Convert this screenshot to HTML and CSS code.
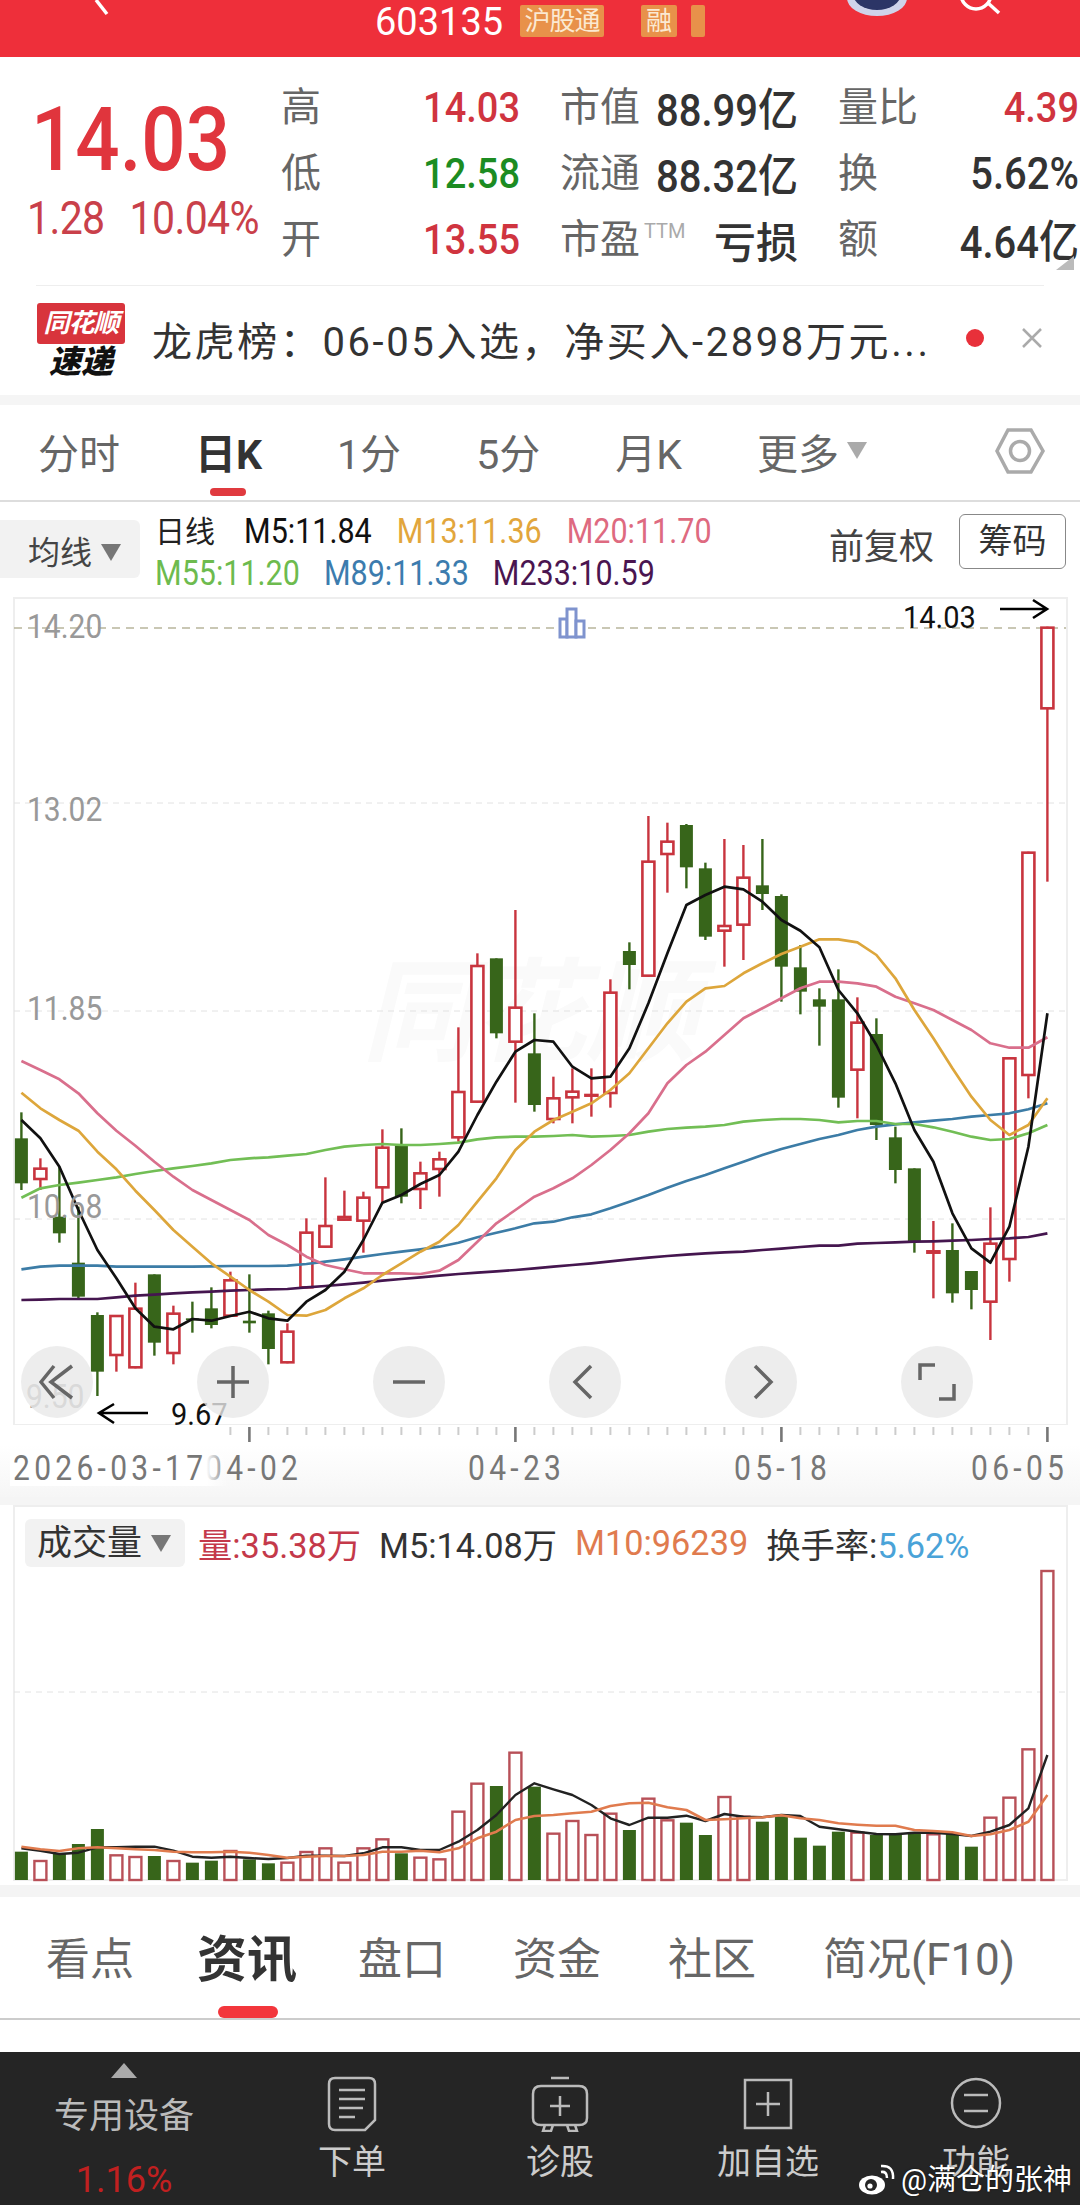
FILE: index.html
```html
<!DOCTYPE html>
<html>
<head>
    <meta charset="utf-8">
    <link rel="stylesheet" href="styles.css">
</head>
<body>
    <header class="top">
        <svg class="back" width="30" height="16" viewBox="0 0 30 16"><path d="M3 0 L14 14" /></svg>
        <div class="code-line">
            <span class="code">603135</span>
            <span class="tag tag-wide">沪股通</span>
            <span class="tag tag-one">融</span>
            <span class="tag tag-cut"></span>
        </div>
        <div class="top-right">
            <svg class="avatar" width="62" height="18" viewBox="0 0 62 18"><ellipse cx="31" cy="-2" rx="30" ry="18" fill="#cfd3ea" /><ellipse cx="31" cy="-6" rx="24" ry="16" fill="#2c3566" /></svg>
            <svg class="search" width="60" height="16" viewBox="0 0 60 16"><circle cx="24" cy="-6" r="15" /><path d="M36 3 L47 13" /></svg>
        </div>
    </header>

    <section class="quote">
        <div class="price-col">
            <div class="price t">14.03</div>
            <div class="change"><span class="t">1.28</span><span class="t">10.04%</span></div>
        </div>
        <div class="stats">
            <div class="cell"><span class="lb">高</span><span class="val red t">14.03</span></div>
            <div class="cell"><span class="lb">市值</span><span class="val t">88.99亿</span></div>
            <div class="cell"><span class="lb">量比</span><span class="val red t">4.39</span></div>
            <div class="cell"><span class="lb">低</span><span class="val green t">12.58</span></div>
            <div class="cell"><span class="lb">流通</span><span class="val t">88.32亿</span></div>
            <div class="cell"><span class="lb">换</span><span class="val t">5.62%</span></div>
            <div class="cell"><span class="lb">开</span><span class="val red t">13.55</span></div>
            <div class="cell"><span class="lb">市盈<sup class="ttm">TTM</sup></span><span class="val loss">亏损</span></div>
            <div class="cell"><span class="lb">额</span><span class="val t">4.64亿</span></div>
        </div>
        <i class="fold"></i>
    </section>

    <section class="news">
        <div class="logo">
            <div class="logo-flag">同花顺</div>
            <div class="logo-sub">速递</div>
        </div>
        <div class="news-text">龙虎榜：06-05入选，净买入-2898万元...</div>
        <i class="dot"></i>
        <svg class="close" width="24" height="24" viewBox="0 0 24 24"><path d="M3 3 L21 21 M21 3 L3 21" /></svg>
    </section>

    <nav class="periods">
        <a>分时</a>
        <a class="on">日K</a>
        <a>1分</a>
        <a>5分</a>
        <a>月K</a>
        <a>更多<i class="tri tri-more"></i></a>
        <svg class="hex" width="52" height="48" viewBox="0 0 52 48"><path d="M14 3 H37 L49 24 L37 45 H14 L3 24 Z" /><circle cx="26" cy="24" r="9.5" /></svg>
    </nav>

    <section class="legend">
        <div class="select">均线<i class="tri"></i></div>
        <div class="ma-list">
            <div class="ma-row">
                <span class="ma-title">日线</span>
                <span class="t">M5:11.84</span>
                <span class="t c13">M13:11.36</span>
                <span class="t c20">M20:11.70</span>
            </div>
            <div class="ma-row ma-row-low">
                <span class="t c55">M55:11.20</span>
                <span class="t c89">M89:11.33</span>
                <span class="t c233">M233:10.59</span>
            </div>
        </div>
        <div class="fq">前复权</div>
        <div class="chip">筹码</div>
    </section>

    <section class="kline">
        <svg id="klineSvg" width="1080" height="828" viewBox="0 597 1080 828"></svg>
        <div class="ctrls">
            <button><svg width="36" height="36" viewBox="0 0 36 36"><path d="M15 2 L2 18 L15 34 M33 2 L12 18 L33 34" /></svg></button>
            <button><svg width="36" height="36" viewBox="0 0 36 36"><path d="M18 2 V34 M2 18 H34" /></svg></button>
            <button><svg width="36" height="36" viewBox="0 0 36 36"><path d="M2 18 H34" /></svg></button>
            <button><svg width="36" height="36" viewBox="0 0 36 36"><path d="M24 2 L8 18 L24 34" /></svg></button>
            <button><svg width="36" height="36" viewBox="0 0 36 36"><path d="M12 2 L28 18 L12 34" /></svg></button>
            <button><svg width="38" height="38" viewBox="0 0 38 38"><path d="M17 2 H2 V17 M36 21 V36 H21" /></svg></button>
        </div>
    </section>
    <svg id="axisSvg" class="axis" width="1080" height="72" viewBox="0 1425 1080 72"></svg>

    <section class="volume">
        <div class="vol-head">
            <div class="select vol-select">成交量<i class="tri"></i></div>
            <span class="vol-red">量:35.38万</span>
            <span>M5:14.08万</span>
            <span class="vol-orange">M10:96239</span>
            <span>换手率:<b class="vol-blue">5.62%</b></span>
        </div>
        <svg id="volSvg" width="1080" height="380" viewBox="0 1505 1080 380"></svg>
    </section>

    <nav class="tabs">
        <a>看点</a>
        <a class="on">资讯</a>
        <a>盘口</a>
        <a>资金</a>
        <a>社区</a>
        <a>简况(F10)</a>
    </nav>

    <footer class="bar">
        <div class="bar-first">
            <i class="tri-up"></i>
            <div class="sector">专用设备</div>
            <div class="sector-pct">1.16%</div>
        </div>
        <div class="bar-item">
            <svg width="50" height="56" viewBox="0 0 50 56"><path d="M8 2 H42 Q48 2 48 8 V44 L38 54 H8 Q2 54 2 48 V8 Q2 2 8 2 Z M12 14 H38 M12 23 H38 M12 32 H36 M12 41 H28" /></svg>
            <span>下单</span>
        </div>
        <div class="bar-item">
            <svg width="58" height="56" viewBox="0 0 58 56"><path d="M20 2 H38 M10 10 H48 Q56 10 56 18 V42 Q56 49 48 49 H10 Q2 49 2 42 V18 Q2 10 10 10 Z M29 20 V40 M19 30 H39 M14 49 L12 55 H20 L22 49 M44 49 L46 55 H38 L36 49" /></svg>
            <span>诊股</span>
        </div>
        <div class="bar-item">
            <svg width="50" height="56" viewBox="0 0 50 56"><path d="M2 4 H48 V52 H2 Z M25 16 V40 M13 28 H37" /></svg>
            <span>加自选</span>
        </div>
        <div class="bar-item">
            <svg width="54" height="56" viewBox="0 0 54 56"><circle cx="27" cy="27" r="24" /><path d="M15 19 H39 M15 35 H39" /></svg>
            <span>功能</span>
        </div>
        <div class="mark">
            <svg width="38" height="32" viewBox="0 0 38 32"><ellipse cx="15" cy="21" rx="13" ry="9.5" fill="#fff" /><circle cx="14" cy="21" r="6" fill="#252525" /><circle cx="13" cy="22" r="2.6" fill="#fff" /><path d="M24 8 Q30 7 30 14 M24 2 Q37 1 36 15" /></svg>
            <span>@满仓的张神</span>
        </div>
    </footer>

    <script src="chart.js"></script>
</body>
</html>
```

FILE: styles.css
```css
* {
    box-sizing: border-box;
}
html, body {
    margin: 0;
    padding: 0;
}
body {
    width: 1080px;
    height: 2205px;
    overflow: hidden;
    background: #fff;
    font-family: Roboto, "Noto Sans CJK SC", sans-serif;
    color: #333;
}
i {
    display: inline-block;
}
.t {
    display: inline-block;
    transform: scaleY(1.13);
}

/* top red bar */
.top {
    height: 57px;
    background: #ee2f3a;
    display: grid;
    grid-template-columns: 375px auto 1fr;
    overflow: hidden;
}
.back {
    margin-left: 93px;
}
.back path, .search path, .search circle {
    fill: none;
    stroke: #fff;
    stroke-width: 3.5;
}
.code-line {
    display: flex;
    align-items: flex-start;
    height: 57px;
}
.code {
    color: #fff;
    font-size: 38px;
    line-height: 44px;
    width: 145px;
}
.tag {
    background: #e8914a;
    color: #fbe9d2;
    font-size: 26px;
    height: 32px;
    line-height: 32px;
    margin-top: 5px;
    border-radius: 2px;
    overflow: hidden;
}
.tag-wide {
    width: 84px;
    text-align: center;
    letter-spacing: -1px;
}
.tag-one {
    width: 36px;
    margin-left: 37px;
    text-align: center;
}
.tag-cut {
    width: 14px;
    margin-left: 14px;
}
.top-right {
    display: flex;
    align-items: flex-start;
    padding-left: 141px;
}
.search {
    margin-left: 44px;
}

/* quote */
.quote {
    height: 228px;
    display: flex;
    padding-top: 17px;
    position: relative;
}
.price-col {
    width: 281px;
    padding-left: 27px;
}
.price {
    display: block;
    font-size: 78px;
    font-weight: 500;
    line-height: 100px;
    margin-top: 17px;
    margin-left: 4px;
    color: #e0353d;
    transform-origin: left center;
}
.change {
    display: flex;
    gap: 25px;
    font-size: 41px;
    line-height: 44px;
    margin-top: 5px;
    color: #c9404a;
    letter-spacing: -0.6px;
    white-space: nowrap;
}
.stats {
    display: grid;
    grid-template-columns: 239px 238px 241px;
    grid-auto-rows: 66px;
    column-gap: 40px;
}
.cell {
    display: flex;
    justify-content: space-between;
    align-items: center;
    white-space: nowrap;
}
.lb {
    font-size: 40px;
    color: #666;
    line-height: 65px;
    position: relative;
}
.ttm {
    position: absolute;
    left: 84px;
    top: 14px;
    font-size: 20px;
    line-height: 20px;
    color: #aaa;
}
.val {
    font-size: 40px;
    font-weight: 500;
    color: #333;
}
.val.red {
    font-size: 38px;
    color: #d0343f;
}
.val.green {
    font-size: 38px;
    color: #1c8c22;
}
.val.loss {
    font-size: 42px;
}
.fold {
    position: absolute;
    right: 6px;
    top: 199px;
    width: 18px;
    height: 14px;
    background: #bbb;
    clip-path: polygon(100% 0, 100% 100%, 0 100%);
}

/* news line */
.news {
    height: 110px;
    margin: 0 36px;
    border-top: 1px solid #eee;
    display: flex;
    align-items: center;
    position: relative;
}
.logo {
    width: 88px;
    margin-left: 1px;
    text-align: center;
}
.logo-flag {
    background: #d8343c;
    color: #fff;
    font-size: 26px;
    font-style: italic;
    font-weight: 700;
    line-height: 40px;
    height: 41px;
    border-radius: 3px;
    letter-spacing: -1px;
    white-space: nowrap;
}
.logo-sub {
    font-size: 32px;
    font-style: italic;
    font-weight: 900;
    line-height: 32px;
    margin-top: 2px;
    color: #111;
}
.news-text {
    margin-left: 27px;
    width: 806px;
    font-size: 40px;
    line-height: 50px;
    letter-spacing: 2.6px;
    color: #333;
    white-space: nowrap;
    margin-top: 4px;
}
.dot {
    width: 18px;
    height: 18px;
    border-radius: 50%;
    background: #e8303a;
    margin-left: 8px;
    margin-top: -6px;
}
.close {
    margin-left: 36px;
    margin-top: -6px;
}
.close path {
    fill: none;
    stroke: #aaa;
    stroke-width: 2.5;
}

/* period tabs */
.periods {
    height: 107px;
    display: flex;
    align-items: flex-start;
    gap: 75px;
    padding: 28px 0 0 38px;
    border-bottom: 2px solid #ddd;
    background: #fff;
    border-top: 10px solid #f5f5f5;
    position: relative;
}
.periods a {
    font-size: 41px;
    line-height: 44px;
    color: #666;
    white-space: nowrap;
    position: relative;
}
.periods a.on {
    color: #333;
    font-weight: 700;
}
.periods a.on::after {
    content: "";
    position: absolute;
    left: 15px;
    top: 55px;
    width: 36px;
    height: 8px;
    border-radius: 4px;
    background: #e03a3f;
}
.tri {
    width: 0;
    height: 0;
    border-left: 10px solid transparent;
    border-right: 10px solid transparent;
    border-top: 17px solid #777;
    margin-left: 9px;
    vertical-align: 3px;
}
.tri-more {
    border-top-color: #aaa;
    margin-left: 8px;
    vertical-align: 10px;
}
.hex {
    position: absolute;
    left: 994px;
    top: 22px;
}
.hex path, .hex circle {
    fill: none;
    stroke: #aaa;
    stroke-width: 3.5;
}

/* moving average legend */
.legend {
    height: 95px;
    display: flex;
    align-items: flex-start;
    position: relative;
    font-size: 30.5px;
}
.select {
    background: #f2f2f2;
    border-radius: 0 6px 6px 0;
    color: #444;
    white-space: nowrap;
}
.legend .select {
    width: 140px;
    height: 58px;
    margin-top: 18px;
    padding-left: 28px;
    font-size: 32px;
    line-height: 66px;
}
.ma-list {
    margin-left: 15px;
    width: 668px;
    padding-top: 9px;
}
.ma-row {
    display: flex;
    gap: 25px;
    height: 42px;
    line-height: 42px;
    white-space: nowrap;
    color: #111;
}
.ma-row-low {
    gap: 24px;
}
.ma-title {
    font-size: 30px;
    margin-right: 4px;
    color: #222;
}
.c13 { color: #e2a63c; }
.c20 { color: #de6a80; }
.c55 { color: #6dbb4e; }
.c89 { color: #3c7cae; }
.c233 { color: #4a1550; }
.fq {
    width: 130px;
    margin-left: 6px;
    margin-top: 21px;
    font-size: 35px;
    line-height: 50px;
    color: #444;
    white-space: nowrap;
}
.chip {
    width: 107px;
    height: 55px;
    margin-top: 12px;
    border: 1px solid #888;
    border-radius: 6px;
    text-align: center;
    font-size: 34px;
    line-height: 52px;
    color: #333;
}

/* k line chart */
.kline {
    height: 828px;
    position: relative;
}
.kline svg, .volume svg, .axis {
    display: block;
}
.ctrls {
    position: absolute;
    left: 21px;
    top: 749px;
    width: 952px;
    display: flex;
    justify-content: space-between;
}
.ctrls button {
    width: 72px;
    height: 72px;
    padding: 0;
    border: 0;
    border-radius: 50%;
    background: rgba(232, 232, 232, 0.8);
    display: flex;
    align-items: center;
    justify-content: center;
}
.ctrls svg path {
    fill: none;
    stroke: #666;
    stroke-width: 3.5;
}
.axis {
    background: linear-gradient(#fff 20px, #f6f6f6);
}
.price-label {
    font-size: 30px;
    fill: #999;
}
.note {
    font-size: 29px;
    fill: #111;
}
.date {
    font-size: 30px;
    fill: #777;
    letter-spacing: 4.3px;
}
.mark-water {
    font-size: 112px;
    font-style: italic;
    font-weight: 700;
    fill: #fafafa;
}

/* volume */
.volume {
    height: 388px;
    border-top: 8px solid #f5f5f5;
    position: relative;
}
.vol-head {
    position: absolute;
    left: 0;
    top: 0;
    display: flex;
    align-items: center;
    height: 76px;
    font-size: 34.3px;
    color: #333;
    white-space: nowrap;
}
.vol-head b {
    font-weight: 400;
}
.vol-head span {
    margin-right: 18px;
}
.vol-select {
    width: 160px;
    height: 48px;
    margin-left: 25px;
    margin-right: 13px;
    padding-left: 12px;
    font-size: 35px;
    line-height: 49px;
    border-radius: 6px;
    color: #333;
}
.vol-red { color: #c4394a; }
.vol-orange { color: #e07b4e; }
.vol-blue { color: #4aa3d8; }

/* bottom tabs */
.tabs {
    height: 167px;
    border-top: 12px solid #f4f4f4;
    display: flex;
    align-items: flex-start;
    padding: 33px 0 0 46px;
    position: relative;
}
.tabs a {
    font-size: 44px;
    line-height: 60px;
    color: #666;
    margin-right: 67px;
    white-space: nowrap;
    position: relative;
}
.tabs a.on {
    font-size: 50px;
    font-weight: 700;
    color: #333;
    margin-left: -4px;
    margin-right: 61px;
}
.tabs a.on::after {
    content: "";
    position: absolute;
    left: 21px;
    top: 76px;
    width: 60px;
    height: 12px;
    border-radius: 6px;
    background: #f3363c;
}
.tabs::after {
    content: "";
    position: absolute;
    left: 0;
    right: 0;
    top: 121px;
    height: 2px;
    background: #ccc;
}

/* dark footer */
.bar {
    height: 153px;
    background: #252525;
    display: grid;
    grid-template-columns: 248px repeat(4, 1fr);
    position: relative;
    color: #ccc;
}
.bar-first {
    display: flex;
    flex-direction: column;
    align-items: center;
    padding-top: 11px;
}
.tri-up {
    width: 0;
    height: 0;
    border-left: 13px solid transparent;
    border-right: 13px solid transparent;
    border-bottom: 15px solid #aaa;
}
.sector {
    font-size: 35px;
    line-height: 50px;
    margin-top: 14px;
    color: #bbb;
}
.sector-pct {
    font-size: 36px;
    line-height: 44px;
    margin-top: 16px;
    color: #c02020;
}
.bar-item {
    display: flex;
    flex-direction: column;
    align-items: center;
    padding-top: 24px;
    font-size: 34px;
    line-height: 44px;
    white-space: nowrap;
}
.bar-item span {
    margin-top: 8px;
}
.bar-item svg path, .bar-item svg circle {
    fill: none;
    stroke: #bbb;
    stroke-width: 2.5;
}
.mark {
    position: absolute;
    left: 857px;
    top: 110px;
    display: flex;
    align-items: center;
    gap: 6px;
    color: #fff;
    font-size: 29px;
    line-height: 36px;
    white-space: nowrap;
    text-shadow: 0 0 2px rgba(0, 0, 0, 0.6);
}
.mark svg path {
    fill: none;
    stroke: #fff;
    stroke-width: 2.5;
}
```

FILE: chart.js
```js
// all y numbers below are in thirds of a pixel, counted from a fixed line
const ky = v => 980 + v / 3;
const vy = v => 1500 + v / 3;
const cx = i => 21.4 + 19 * i;

const RED = "#c8343e";
const GREEN = "#37651a";

// up/down, body top, body bottom, wick top, wick bottom
const candles = [
    ["g",475,610,397,630],["r",563,600,535,630],["g",710,760,560,788],["g",848,950,680,955],
    ["g",1005,1175,997,1248],["r",1005,1128,1005,1175],["r",983,1165,908,1165],["g",883,1088,883,1127],
    ["r",998,1122,977,1153],["g",1015,1021,965,1058],["g",985,1035,922,1045],["r",898,1010,875,1010],
    ["g",1022,1030,883,1058],["g",1000,1107,992,1153],["r",1052,1150,1030,1150],["r",755,925,715,925],
    ["r",735,803,592,803],["r",708,722,632,722],["r",650,725,635,818],["r",500,625,448,670],
    ["g",497,650,445,670],["r",577,630,545,687],["r",535,570,515,650],["r",333,475,142,485],
    ["r",-45,368,-80,368],["g",-65,160,-65,175],["r",80,188,-210,368],["g",220,375,100,395],
    ["r",352,420,290,430],["r",332,355,265,430],["r",342,350,265,410],["r",35,342,-2,383],
    ["g",-87,-45,-113,28],["r",-358,-10,-492,-10],["r",-418,-375,-472,-262],["g",-465,-338,-468,-275],
    ["g",-335,-130,-352,-120],["r",-165,-145,-423,-40],["r",-310,-163,-405,-60],["g",-284,-258,-423,-210],
    ["g",-252,-40,-257,65],["g",-38,35,-105,103],["g",58,80,25,197],["g",58,353,-32,383],
    ["r",125,272,52,415],["g",162,435,115,480],["g",472,570,440,610],["g",565,785,565,818],
    ["r",811,821,723,955],["g",810,940,730,968],["g",873,930,873,988],["r",788,968,682,1080],
    ["r",232,840,232,905],["r",-385,288,-385,355],["r",-1060,-812,-1060,-295]
];

const maLines = [
    { color: "#45164f", pts: [960,959,957,957,957,952,947,944,940,937,935,932,930,928,927,922,918,913,908,902,897,892,887,882,878,874,870,865,860,855,850,844,838,833,828,824,820,817,815,810,806,801,797,797,791,789,787,785,784,782,780,777,775,771,760] },
    { color: "#3c7ca6", pts: [868,860,857,857,857,860,860,860,860,860,859,858,858,858,857,852,845,838,830,822,815,808,800,788,772,758,745,730,725,712,703,685,665,645,623,603,585,565,545,525,507,492,477,465,450,440,433,427,422,417,410,405,400,388,370] },
    { color: "#72be55", pts: [653,625,615,608,600,592,582,573,565,558,550,540,535,532,527,522,510,500,495,492,495,495,492,488,478,472,470,470,468,465,470,468,465,455,447,443,440,435,425,420,417,417,420,427,423,423,432,432,442,455,470,480,477,460,435] },
    { color: "#d96f8c", pts: [243,270,298,340,400,452,497,545,590,630,660,690,720,765,795,830,855,868,880,880,880,882,872,840,785,730,690,650,625,595,555,510,460,400,310,255,215,165,115,85,55,25,5,5,10,20,50,70,90,120,150,190,203,203,172] },
    { color: "#dda63b", pts: [338,385,420,452,515,568,632,690,750,800,850,890,930,965,1005,1007,990,955,925,885,850,815,785,735,665,595,510,455,420,395,370,330,280,205,130,65,25,18,-20,-50,-78,-100,-122,-122,-113,-75,-5,90,175,265,350,420,465,435,355] },
    { color: "#111", pts: [420,475,560,690,810,895,985,1040,1048,1017,1022,1008,995,1015,1022,965,930,875,780,668,645,612,585,515,405,305,215,180,185,260,295,290,205,70,-80,-225,-255,-280,-272,-235,-180,-148,-98,30,100,195,310,450,545,700,805,848,740,500,100] }
];

// r/g and the top of each volume bar, the baseline is 1140
const volumes = [
    ["g",1055],["r",1080],["g",1062],["g",1032],["g",987],["r",1063],["r",1068],["g",1068],["r",1080],["g",1088],
    ["g",1082],["r",1050],["g",1078],["g",1090],["r",1085],["r",1053],["r",1042],["r",1085],["r",1042],["r",1015],
    ["g",1060],["r",1070],["r",1075],["r",932],["r",848],["g",858],["r",755],["g",860],["r",998],["r",960],
    ["r",1002],["r",938],["g",990],["r",893],["r",958],["g",968],["g",1005],["r",888],["r",947],["g",965],
    ["g",950],["g",1013],["g",1037],["g",995],["r",995],["g",1005],["g",1005],["g",1002],["r",1000],["g",1000],
    ["g",1040],["r",950],["r",890],["r",745],["r",210]
];
const volM5 = [1045,1052,1062,1058,1042,1042,1040,1040,1052,1070,1073,1070,1074,1077,1074,1067,1067,1068,1060,1042,1042,1050,1050,1025,990,945,885,850,868,885,915,955,975,953,953,947,963,942,950,952,945,948,980,988,995,1002,1003,998,998,1002,1008,995,975,925,765];
const volM10 = [1040,1048,1053,1045,1042,1045,1048,1050,1055,1057,1057,1055,1058,1065,1073,1070,1068,1068,1065,1055,1055,1052,1057,1045,1015,995,960,948,945,940,935,918,910,908,922,930,960,958,955,952,946,955,960,970,974,977,977,990,993,997,1008,1003,990,965,885];

function line(x1, y1, x2, y2, color, w, extra) {
    return `<line x1="${x1}" y1="${y1}" x2="${x2}" y2="${y2}" stroke="${color}" stroke-width="${w}" ${extra || ""}/>`;
}
function label(x, y, str, cls, sy) {
    return `<text class="${cls}" transform="translate(${x} ${y}) scale(1 ${sy || 1.13})">${str}</text>`;
}
function polyline(pts, toY, color, w) {
    const p = pts.map((v, i) => cx(i) + "," + toY(v).toFixed(1)).join(" ");
    return `<polyline points="${p}" fill="none" stroke="${color}" stroke-width="${w}" stroke-linejoin="round"/>`;
}

function drawKline() {
    let s = "";
    s += `<text class="mark-water" x="362" y="1052">同花顺</text>`;
    s += `<rect x="14" y="598" width="1053" height="827" fill="none" stroke="#eee" stroke-width="2"/>`;
    s += line(14, 628, 1066, 628, "#b8b59c", 1.6, 'stroke-dasharray="8 6"');
    [803, 1011, 1219].forEach(y => {
        s += line(14, y, 1066, y, "#e2e2e2", 1, 'stroke-dasharray="6 5"');
    });

    // little bar icon in the middle of the top line
    s += `<g fill="#fff" stroke="#7f93ce" stroke-width="3"><rect x="560" y="619" width="7" height="18"/><rect x="567" y="609" width="9" height="28"/><rect x="576" y="621" width="8" height="16"/></g>`;

    candles.forEach((c, i) => {
        const x = cx(i);
        const color = c[0] == "r" ? RED : GREEN;
        s += line(x, ky(c[3]), x, ky(c[4]), color, 2.4);
        if (c[0] == "r") {
            s += `<rect x="${x - 6}" y="${ky(c[1]) + 1}" width="12" height="${(c[2] - c[1]) / 3 - 2}" fill="#fff" stroke="${color}" stroke-width="2.6"/>`;
        } else {
            s += `<rect x="${x - 6.5}" y="${ky(c[1])}" width="13" height="${(c[2] - c[1]) / 3}" fill="${color}"/>`;
        }
    });
    maLines.forEach(m => {
        s += polyline(m.pts, ky, m.color, 2.7);
    });

    s += label(27, 638, "14.20", "price-label");
    s += label(27, 821, "13.02", "price-label");
    s += label(27, 1020, "11.85", "price-label");
    s += label(27, 1218, "10.68", "price-label");
    s += label(26, 1408, "9.50", "price-label");

    s += label(903, 628, "14.03", "note", 1.1);
    s += `<path d="M1000 609 H1047 M1033 600 L1047 609 L1033 618" fill="none" stroke="#000" stroke-width="2.6"/>`;
    s += label(171, 1425, "9.67", "note", 1.1);
    s += `<path d="M148 1413 H99 M114 1404 L99 1413 L114 1423" fill="none" stroke="#000" stroke-width="2.6"/>`;
    document.getElementById("klineSvg").innerHTML = s;
}

function drawAxis() {
    let s = "";
    for (let i = 11; i < 55; i++) {
        const major = (i - 12) % 14 == 0;
        s += line(cx(i), 1427, cx(i), major ? 1442 : 1435, major ? "#777" : "#ccc", major ? 2.6 : 2);
    }
    s += label(205, 1480, "04-02", "date", 1.15);
    s += `<rect x="10" y="1450" width="218" height="36" fill="url(#fadeOut)"/>`;
    s += `<defs><linearGradient id="fadeOut"><stop offset="0.9" stop-color="#fff"/><stop offset="1" stop-color="#fff" stop-opacity="0"/></linearGradient></defs>`;
    s += label(13, 1480, "2026-03-17", "date", 1.15);
    s += label(468, 1480, "04-23", "date", 1.15);
    s += label(734, 1480, "05-18", "date", 1.15);
    s += label(971, 1480, "06-05", "date", 1.15);
    document.getElementById("axisSvg").innerHTML = s;
}

function drawVolume() {
    let s = "";
    s += `<rect x="14" y="1506" width="1053" height="374" fill="none" stroke="#eee" stroke-width="2"/>`;
    s += line(14, 1692, 1066, 1692, "#e2e2e2", 1, 'stroke-dasharray="6 5"');
    volumes.forEach((v, i) => {
        const x = cx(i);
        const top = vy(v[1]);
        if (v[0] == "r") {
            s += `<rect x="${x - 6}" y="${top + 1}" width="12" height="${1879 - top}" fill="#fff" stroke="#b85058" stroke-width="2.4"/>`;
        } else {
            s += `<rect x="${x - 6.5}" y="${top}" width="13" height="${1880 - top}" fill="${GREEN}"/>`;
        }
    });
    s += polyline(volM5, vy, "#222", 2.4);
    s += polyline(volM10, vy, "#e07b4e", 2.6);
    document.getElementById("volSvg").innerHTML = s;
}

drawKline();
drawAxis();
drawVolume();
```
